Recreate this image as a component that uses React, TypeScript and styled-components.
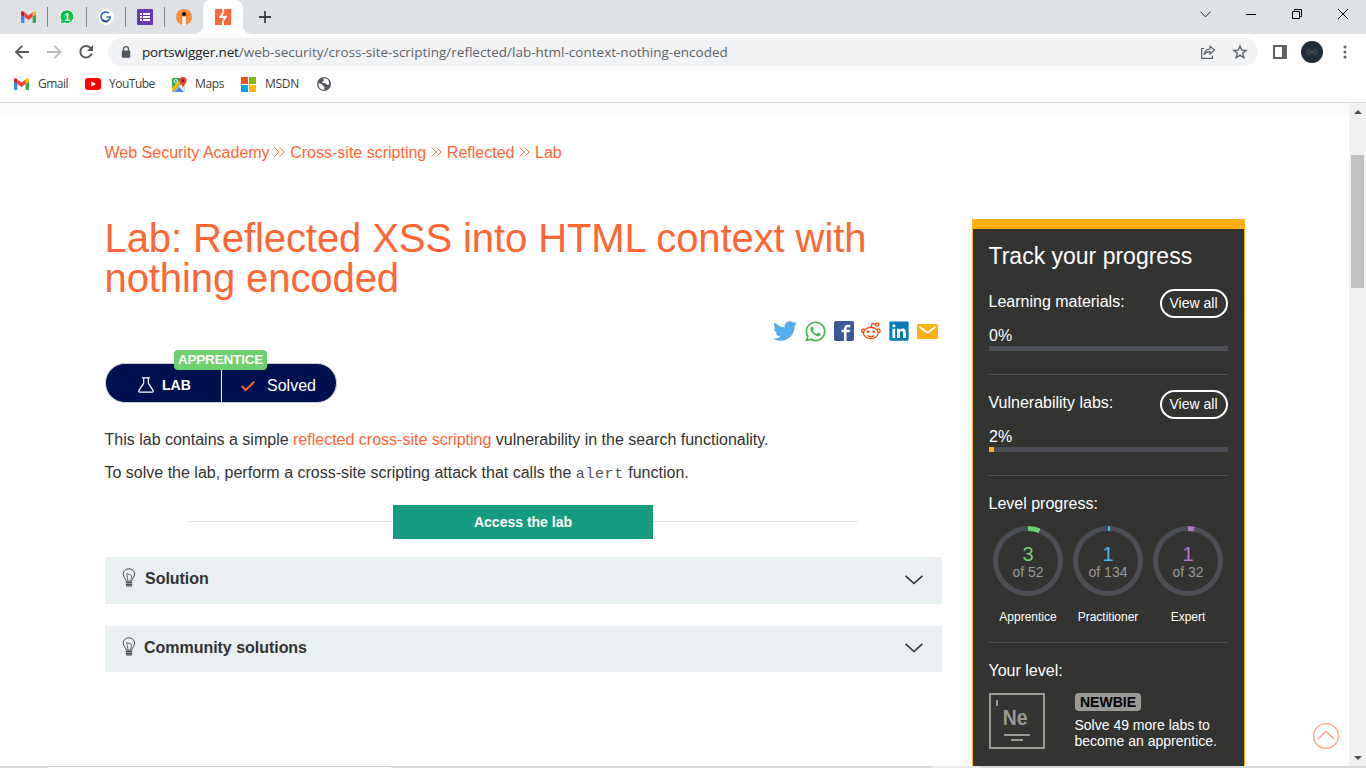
import React from 'react';
import styled, { createGlobalStyle } from 'styled-components';
import { FaTwitter, FaWhatsapp, FaLinkedin } from 'react-icons/fa';
import { ImFacebook2 } from 'react-icons/im';

const ORANGE = '#ff6633';
const AMBER = '#ffaf12';
const TRACK = '#4b4e54';

const GlobalStyle = createGlobalStyle`
  * { box-sizing: border-box; }
  body { margin: 0; background: #fff; overflow: hidden; }
  svg { display: block; flex: none; }
`;

const Browser = styled.div`
  width: 1366px;
  height: 768px;
  display: flex;
  flex-direction: column;
  overflow: hidden;
  font-family: 'Liberation Sans', Arial, sans-serif;
`;

/* ---------- tab strip ---------- */
const TabStrip = styled.div`
  height: 34px;
  flex: none;
  background: #dee1e6;
  display: flex;
  align-items: center;
  padding-left: 9px;
`;
const PinnedTab = styled.div<{ $divider?: boolean }>`
  width: 39px;
  height: 20px;
  display: flex;
  align-items: center;
  justify-content: center;
  border-right: 1px solid ${(p) => (p.$divider ? '#80848a' : 'transparent')};
`;
const ActiveTab = styled.div`
  width: 40px;
  height: 34px;
  margin-left: -1px;
  background: #fff;
  border-radius: 8px 8px 0 0;
  display: flex;
  align-items: center;
  justify-content: center;
  position: relative;
  &::before, &::after {
    content: '';
    position: absolute;
    bottom: 0;
    width: 8px;
    height: 8px;
  }
  &::before { left: -8px; background: radial-gradient(circle at 0 0, transparent 7.5px, #fff 8px); }
  &::after { right: -8px; background: radial-gradient(circle at 100% 0, transparent 7.5px, #fff 8px); }
`;
const NewTab = styled.div`
  width: 44px;
  display: flex;
  justify-content: center;
`;
const WindowControls = styled.div`
  margin-left: auto;
  display: flex;
  height: 28px;
  align-self: flex-start;
`;
const WindowButton = styled.div`
  width: 46px;
  display: flex;
  align-items: center;
  justify-content: center;
`;

/* ---------- toolbar ---------- */
const Toolbar = styled.div`
  height: 36px;
  flex: none;
  display: flex;
  align-items: center;
  padding: 0 12px 0 13px;
`;
const NavButton = styled.div`
  width: 32px;
  padding-left: 2px;
`;
const Omnibox = styled.div`
  width: 1150px;
  height: 28px;
  margin-left: -1px;
  border-radius: 14px;
  background: #f1f3f4;
  display: flex;
  align-items: center;
  padding: 0 10px 0 12px;
`;
const Url = styled.div`
  margin-left: 10px;
  flex: 1;
  font-family: 'Open Sans', 'Noto Sans', sans-serif;
  font-size: 13.5px;
  letter-spacing: 0;
  color: #5f6368;
  white-space: nowrap;
  b { font-weight: 400; color: #202124; letter-spacing: -0.15px; }
`;
const OmniboxActions = styled.div`
  display: flex;
  gap: 16px;
  align-items: center;
`;
const ToolbarActions = styled.div`
  display: flex;
  align-items: center;
  margin-left: 15px;
`;
const Avatar = styled.div`
  width: 22px;
  height: 22px;
  margin: 0 20px 0 14px;
  border-radius: 50%;
  background: #202c3a;
  display: flex;
  align-items: center;
  justify-content: center;
`;

/* ---------- bookmarks ---------- */
const Bookmarks = styled.div`
  height: 33px;
  flex: none;
  display: flex;
  align-items: flex-start;
  padding: 5px 0 0 14px;
  border-bottom: 1px solid #dadce0;
`;
const Bookmark = styled.div<{ $width: number; $gap: number; $track: number }>`
  width: ${(p) => p.$width}px;
  height: 18px;
  display: flex;
  align-items: center;
  gap: ${(p) => p.$gap}px;
  font: 12px 'Open Sans', 'Noto Sans', sans-serif;
  letter-spacing: ${(p) => p.$track}px;
  color: #3c4043;
  white-space: nowrap;
  span { margin-top: -1px; }
`;

/* ---------- page ---------- */
const Viewport = styled.div`
  height: 663px;
  flex: none;
  display: flex;
`;
const Page = styled.main`
  width: 1349px;
  height: 663px;
  overflow: hidden;
  position: relative;
`;
const HeaderEdge = styled.div`
  height: 14px;
  background: #fbfbfb;
`;
const Breadcrumbs = styled.nav`
  display: flex;
  align-items: center;
  gap: 5px;
  height: 20px;
  margin: 25px 0 0 104.5px;
  font-size: 16px;
  line-height: 20px;
  color: ${ORANGE};
  white-space: nowrap;
  span { padding-top: 2px; }
  svg { margin: 0 0 1px -0.4px; }
`;
const Columns = styled.div`
  display: flex;
  align-items: flex-start;
  gap: 30px;
  margin: 57px 0 0 105px;
`;
const Article = styled.article`
  width: 837px;
`;
const Title = styled.h1`
  margin: -1px 0 0 -0.5px;
  font-size: 40px;
  font-weight: 400;
  line-height: 40px;
  letter-spacing: -0.09px;
  color: ${ORANGE};
`;
const ShareRow = styled.div`
  display: flex;
  align-items: center;
  justify-content: flex-end;
  gap: 7px;
  height: 22px;
  margin-top: 22px;
  padding-right: 4px;
`;
const LabStatus = styled.div`
  position: relative;
  width: 232px;
  height: 40px;
  margin: 21px 0 0;
  border: 1px solid #c9cdd8;
  border-radius: 20px;
  background: #00104e;
  color: #fff;
  display: flex;
`;
const StatusPart = styled.div<{ $bold?: boolean }>`
  flex: ${(p) => (p.$bold ? '0 0 116px' : '1')};
  display: flex;
  align-items: center;
  padding: ${(p) => (p.$bold ? 4 : 5)}px 0 0 ${(p) => (p.$bold ? 32 : 19)}px;
  gap: ${(p) => (p.$bold ? 8 : 12)}px;
  font-size: ${(p) => (p.$bold ? 14 : 16)}px;
  font-weight: ${(p) => (p.$bold ? 700 : 400)};
  border-right: ${(p) => (p.$bold ? '1px solid #fff' : 'none')};
`;
const LevelLabel = styled.span`
  position: absolute;
  left: 68px;
  top: -14px;
  width: 93px;
  height: 20px;
  border-radius: 4px;
  background: #6fd06e;
  font-size: 13.5px;
  font-weight: 700;
  line-height: 20px;
  text-align: center;
  letter-spacing: -0.18px;
`;
const Paragraph = styled.p`
  margin: 0 0 9px -0.5px;
  font-size: 16px;
  line-height: 24px;
  color: #333332;
  white-space: nowrap;
  a { color: ${ORANGE}; }
  code { font-family: 'Liberation Mono', 'Courier New', monospace; font-size: 15px; letter-spacing: 0.6px; color: #555; }
`;
const Description = styled.div`
  margin-top: 25px;
`;
const AccessRow = styled.div`
  display: flex;
  align-items: center;
  width: 670px;
  margin: 18px 0 18px 83px;
`;
const Rule = styled.span`
  flex: 1;
  height: 1px;
  background: #e4e4e4;
  margin-bottom: 1px;
`;
const AccessButton = styled.button`
  width: 260px;
  height: 34px;
  padding: 0;
  border: 0;
  background: #159b80;
  color: #fff;
  font: 700 14px 'Liberation Sans', Arial, sans-serif;
`;
const Accordion = styled.div<{ $height: number }>`
  height: ${(p) => p.$height}px;
  margin-bottom: 22px;
  padding: 11px 19px 0 17px;
  background: #eaeff2;
  display: flex;
  align-items: flex-start;
  font-size: 16px;
  font-weight: 700;
  line-height: 21px;
  letter-spacing: -0.03px;
  color: #333332;
`;
const AccordionTitle = styled.span<{ $inset: number }>`
  flex: 1;
  margin-left: ${(p) => p.$inset}px;
`;
const AccordionArrow = styled.span<{ $drop: number }>`
  padding-top: ${(p) => p.$drop}px;
`;

/* ---------- progress panel ---------- */
const Panel = styled.aside`
  width: 273px;
  height: 560px;
  padding: 0 16px;
  border: 1px solid ${AMBER};
  border-top-width: 10px;
  background: #333332;
  color: #fff;
`;
const PanelTitle = styled.h2`
  margin: 14px 0 19px -0.5px;
  font-size: 23px;
  font-weight: 400;
  line-height: 27px;
  white-space: nowrap;
`;
const PanelSection = styled.section<{ $height: number; $pad?: number }>`
  height: ${(p) => p.$height}px;
  padding-top: ${(p) => p.$pad ?? 0}px;
  border-bottom: 1px solid #4e5056;
`;
const SectionHead = styled.div`
  display: flex;
  justify-content: space-between;
  height: 36px;
  margin-left: -0.5px;
  font-size: 16px;
  line-height: 26px;
`;
const ViewAll = styled.span`
  width: 68px;
  height: 29px;
  border: 2px solid #fff;
  border-radius: 15px;
  padding-right: 1px;
  font-size: 14px;
  line-height: 25px;
  text-align: center;
`;
const Percent = styled.div`
  font-size: 16px;
  line-height: 21px;
`;
const Bar = styled.div`
  height: 5px;
  background: ${TRACK};
`;
const BarFill = styled.div`
  height: 5px;
  background: ${AMBER};
`;
const PanelLabel = styled.div`
  margin-left: -0.5px;
  height: 24px;
  font-size: 16px;
  line-height: 26px;
`;
const Rings = styled.div`
  display: grid;
  grid-template-columns: repeat(3, 80px);
  margin: 11px 0 0 -1px;
`;
const RingItem = styled.div`
  display: flex;
  flex-direction: column;
  align-items: center;
  font-size: 12px;
  line-height: 16px;
`;
const Ring = styled.div<{ $color: string; $deg: number }>`
  width: 70px;
  height: 70px;
  margin-bottom: 13px;
  padding: 5px;
  border-radius: 50%;
  background: conic-gradient(${(p) => p.$color} ${(p) => p.$deg}deg, ${TRACK} ${(p) => p.$deg}deg);
`;
const RingCore = styled.div<{ $color: string }>`
  height: 60px;
  border-radius: 50%;
  background: #333332;
  color: #999;
  text-align: center;
  padding-top: 13px;
  font-size: 14px;
  line-height: 17px;
  b { display: block; font-weight: 400; font-size: 20px; line-height: 20px; color: ${(p) => p.$color}; }
`;
const LevelRow = styled.div`
  display: flex;
  gap: 30px;
  margin-top: 11px;
`;
const ElementTile = styled.div`
  width: 56px;
  height: 56px;
  border: 2px solid #999996;
  display: flex;
  flex-direction: column;
  align-items: center;
  color: #999996;
  font-weight: 700;
  font-size: 22px;
  line-height: 22px;
  padding: 12px 4px 0 0;
  position: relative;
  span { transform: scaleX(0.88); }
`;
const TileMark = styled.i<{ $x: number; $y: number; $w: number; $h: number }>`
  position: absolute;
  left: ${(p) => p.$x}px;
  top: ${(p) => p.$y}px;
  width: ${(p) => p.$w}px;
  height: ${(p) => p.$h}px;
  background: #999996;
`;
const LevelText = styled.div`
  margin-left: -0.5px;
  font-size: 14px;
  line-height: 16px;
  white-space: nowrap;
`;
const Newbie = styled.div`
  width: 66px;
  height: 18px;
  margin: 0 0 6px 0.5px;
  border-radius: 4px;
  background: #999996;
  color: #000;
  font-weight: 700;
  line-height: 18px;
  text-align: center;
`;
const BackToTop = styled.div`
  position: absolute;
  left: 1312px;
  top: 619px;
`;

/* ---------- scrollbar and lower edge ---------- */
const Scrollbar = styled.div`
  width: 17px;
  background: #f1f1f1;
  display: flex;
  flex-direction: column;
  align-items: center;
  padding: 7px 0 6px;
`;
const Thumb = styled.div`
  width: 13px;
  height: 133px;
  margin: 41px 0 auto;
  background: #c1c1c1;
`;
const WindowEdge = styled.div`
  display: flex;
  height: 2px;
  flex: none;
`;
const EdgePiece = styled.div<{ $width?: number; $color: string; $open?: boolean }>`
  ${(p) => (p.$width ? `width: ${p.$width}px;` : 'flex: 1;')}
  background: ${(p) => p.$color};
  border-top: ${(p) => (p.$open ? '1px solid #c8c8c8' : 'none')};
`;

const GmailIcon = ({ w = 15 }: { w?: number }) => (
  <svg width={w} height={w * 0.8} viewBox="0 0 15 12">
    <path d="M0 2v9q0 1 1 1h2.4V5z" fill="#4285f4" />
    <path d="M11.6 5v7H14q1 0 1-1V2z" fill="#34a853" />
    <path d="M11.6 1.4V6L15 3.4V2c0-1.7-1.8-2.5-3.4-.6z" fill="#fbbc04" />
    <path d="M0 2v1.4L3.4 6V1.4C1.8-.5 0 .3 0 2z" fill="#c5221f" />
    <path d="M3.4 6V1.4l4.1 3.1 4.1-3.1V6L7.5 9.1z" fill="#ea4335" />
  </svg>
);
const WhatsAppTabIcon = () => (
  <svg width="16" height="16" viewBox="0 0 16 16">
    <path d="M8 .7A7 7 0 1 1 4.8 14L1 15l1-3.6A7 7 0 0 1 8 .7z" fill="#0ac244" stroke="#fff" />
    <text x="8.2" y="11.6" fontSize="10.5" fontWeight="700" textAnchor="middle" fill="#fff">1</text>
  </svg>
);
const GTabIcon = () => (
  <svg width="16" height="16" viewBox="0 0 16 16">
    <circle cx="8" cy="8" r="8" fill="#fff" />
    <path d="M10.7 4.2A4.6 4.6 0 1 0 12.2 8H8.5" fill="none" stroke="#2766cc" strokeWidth="1.7" />
    <path d="M4.2 10.3a4.6 4.6 0 0 0 5.6 2" fill="none" stroke="#173c78" strokeWidth="1.6" />
  </svg>
);
const FormsIcon = () => (
  <svg width="16" height="16" viewBox="0 0 16 16">
    <rect width="16" height="16" rx="1" fill="#673ab7" />
    <path d="M3 4h2v2H3zM6 4h7v2H6zM3 7h2v2H3zM6 7h7v2H6zM3 10h2v2H3zM6 10h7v2H6z" fill="#fff" />
  </svg>
);
const InfoTabIcon = () => (
  <svg width="16" height="16" viewBox="0 0 16 16">
    <circle cx="8" cy="8" r="8" fill="#f68c3c" />
    <path d="M6.3 7.5h3.4V16H6.3z" fill="#fff" />
    <circle cx="8" cy="5" r="2" fill="#111" />
  </svg>
);
const BoltIcon = () => (
  <svg width="16" height="16" viewBox="0 0 16 16">
    <path d="M0 0h16v16H0z" fill={ORANGE} />
    <path d="M7.2 0h2v3.2L7.4 6.8h5L9 12.3V16H7v-3.4l1.7-3.5H3.6L7.2 3.6z" fill="#fff" />
  </svg>
);
const ShareIcon = () => (
  <svg width="16" height="16" viewBox="0 0 16 16" fill="none" stroke="#5f6368" strokeWidth="1.2">
    <path d="M4.2 4.5H1.6v9.9h10.8v-2.6" />
    <path d="M4 10.8c.4-3.8 2.4-5.6 6-5.8V2.2L14.6 6 10 10V7.6c-2.7-.1-4.5.8-6 3.2z" />
  </svg>
);
const Bulb = () => (
  <svg width="14" height="19" viewBox="0 0 14 19" fill="none" stroke="#4c4e4f" strokeWidth="1">
    <path d="M4.2 13.2C4 10.5 1.2 9.3 1.2 6.1a5.7 5.3 0 0 1 11.4 0c0 3.2-2.7 4.4-2.9 7.1z" />
    <path d="M6 13 4.8 5.5l3.2 1.3 1.6.7L8.6 13" strokeWidth=".8" />
    <path d="M3.8 14.7h6.4M3.8 16.3h6.4M4 17.9h6" strokeWidth="1.2" />
  </svg>
);
const Chevron = () => (
  <svg width="18" height="10" viewBox="0 0 18 10" fill="none" stroke="#333332" strokeWidth="1.6">
    <path d="M.6.8 9 8.5 17.4.8" />
  </svg>
);
const DoubleChevron = () => (
  <svg width="11" height="10" viewBox="0 0 11 10" fill="none" stroke={ORANGE} strokeWidth="1">
    <path d="M.6.5 5 5 .6 9.5M5.8.5 10.2 5 5.8 9.5" />
  </svg>
);
const Reddit = () => (
  <svg width="20" height="18" viewBox="0 0 20 18" fill="none" stroke="#ff4500" strokeWidth="1.2">
    <ellipse cx="9.8" cy="11" rx="7.3" ry="5.7" />
    <path d="M3.5 7.5C2 6.3.6 7.4.6 8.9c0 1 .8 1.7 1.9 2M16.2 7.5c1.5-1.2 2.9-.1 2.9 1.4 0 1-.8 1.7-1.9 2" />
    <path d="M9.9 5.3 11.2 1.5l3.5.9" />
    <circle cx="16.2" cy="2.5" r="1.7" />
    <path d="M6.4 13.5c2 1.5 4.9 1.5 6.9 0" />
    <circle cx="7" cy="9.8" r="1.3" fill="#ff4500" stroke="none" />
    <circle cx="12.7" cy="9.8" r="1.3" fill="#ff4500" stroke="none" />
  </svg>
);

const crumbs = ['Web Security Academy', 'Cross-site scripting', 'Reflected', 'Lab'];
const rings = [
  { name: 'Apprentice', done: 3, total: 52, color: '#6fd06e', deg: 20.8 },
  { name: 'Practitioner', done: 1, total: 134, color: '#44b8f3', deg: 3 },
  { name: 'Expert', done: 1, total: 32, color: '#b077c9', deg: 11.3 },
];
const materials = [
  { name: 'Learning materials:', percent: 0, height: 86, pad: 0 },
  { name: 'Vulnerability labs:', percent: 2, height: 101, pad: 15 },
];

export default function App() {
  return (
    <Browser>
      <GlobalStyle />
      <TabStrip>
        <PinnedTab $divider><GmailIcon /></PinnedTab>
        <PinnedTab $divider><WhatsAppTabIcon /></PinnedTab>
        <PinnedTab $divider><GTabIcon /></PinnedTab>
        <PinnedTab $divider><FormsIcon /></PinnedTab>
        <PinnedTab><InfoTabIcon /></PinnedTab>
        <ActiveTab><BoltIcon /></ActiveTab>
        <NewTab>
          <svg width="12" height="12" viewBox="0 0 12 12"><path d="M6 0v12M0 6h12" stroke="#3c4043" strokeWidth="1.8" /></svg>
        </NewTab>
        <WindowControls>
          <WindowButton>
            <svg width="11" height="7" viewBox="0 0 11 7"><path d="M.5.7 5.5 5.9 10.5.7" fill="none" stroke="#222" /></svg>
          </WindowButton>
          <WindowButton>
            <svg width="10" height="2"><path d="M0 1.5h10" stroke="#000" /></svg>
          </WindowButton>
          <WindowButton>
            <svg width="10" height="10" fill="none" stroke="#000"><path d="M.5 2.5h7v7h-7zM2.5 2.5v-2h7v7h-2" /></svg>
          </WindowButton>
          <WindowButton>
            <svg width="10" height="10" stroke="#000"><path d="M0 0l10 10M10 0 0 10" /></svg>
          </WindowButton>
        </WindowControls>
      </TabStrip>

      <Toolbar>
        <NavButton>
          <svg width="15" height="14" viewBox="0 0 15 14" fill="none" stroke="#55585d" strokeWidth="1.9"><path d="M14 7H1.5M7.2.8 1 7l6.2 6.2" /></svg>
        </NavButton>
        <NavButton>
          <svg width="15" height="14" viewBox="0 0 15 14" fill="none" stroke="#b9bbbe" strokeWidth="1.9"><path d="M0 7h13M7.3.8 13.5 7l-6.2 6.2" /></svg>
        </NavButton>
        <NavButton>
          <svg width="15" height="14" viewBox="0 0 15 14"><path d="M12 3.5A5.8 5.8 0 1 0 12.7 8.5" fill="none" stroke="#55585d" strokeWidth="1.9" /><path d="M14 0v6H8z" fill="#55585d" /></svg>
        </NavButton>
        <Omnibox>
          <svg width="12" height="12" viewBox="0 0 12 12"><path d="M3.5 5V3.2a2.5 2.5 0 0 1 5 0V5" fill="none" stroke="#55585d" strokeWidth="1.3" /><rect x="1.8" y="4.4" width="8.4" height="7.3" rx="1" fill="#55585d" /></svg>
          <Url><b>portswigger.net</b>/web-security/cross-site-scripting/reflected/lab-html-context-nothing-encoded</Url>
          <OmniboxActions>
            <ShareIcon />
            <svg width="16" height="16" viewBox="0 0 16 16"><path d="m8 2 1.7 4.1 4.4.3-3.4 2.9 1.1 4.3L8 11.3l-3.8 2.3 1.1-4.3L1.9 6.4l4.4-.3z" fill="none" stroke="#5f6368" strokeWidth="1.4" /></svg>
          </OmniboxActions>
        </Omnibox>
        <ToolbarActions>
          <svg width="14" height="14"><path d="M0 0h14v14H0z" fill="#5f6368" /><path d="M2 2h7v10H2z" fill="#fff" /></svg>
          <Avatar>
            <svg width="12" height="6" viewBox="0 0 12 6" fill="none" stroke="#4c545d"><circle cx="3" cy="3" r="2.2" /><circle cx="9" cy="3" r="2.2" /><path d="M3 3h6" /></svg>
          </Avatar>
          <svg width="4" height="14" fill="#5f6368"><circle cx="2" cy="2" r="1.5" /><circle cx="2" cy="7" r="1.5" /><circle cx="2" cy="12" r="1.5" /></svg>
        </ToolbarActions>
      </Toolbar>

      <Bookmarks>
        <Bookmark $width={71} $gap={9} $track={-0.5}><GmailIcon /><span>Gmail</span></Bookmark>
        <Bookmark $width={87} $gap={8} $track={-0.5}>
          <svg width="16" height="12" viewBox="0 0 16 12"><rect width="16" height="12" rx="3" fill="#f00" /><path d="M6.3 3.2v5.6l4.7-2.8z" fill="#fff" /></svg>
          <span>YouTube</span>
        </Bookmark>
        <Bookmark $width={69} $gap={8} $track={-0.35}>
          <svg width="15" height="15" viewBox="0 0 15 15">
            <rect y="1" width="13" height="14" rx="1.5" fill="#34a853" />
            <path d="M1 15 12.5 3.5l.5 10.5q0 1-1 1z" fill="#e8eaed" />
            <path d="M2 15 7 10l5 5z" fill="#4285f4" />
            <path d="M0 11 9 2l2 2L1 14q-1 0-1-1z" fill="#fbbc04" />
            <path d="M0 9V2.5Q0 1 1.5 1H9z" fill="#34a853" />
            <circle cx="3.8" cy="4.3" r="1.7" fill="none" stroke="#fff" />
            <path d="M11 0a3.7 3.7 0 0 1 3.7 3.7C14.7 6 11.7 7.5 11 11c-.7-3.5-3.7-5-3.7-7.3A3.7 3.7 0 0 1 11 0z" fill="#ea4335" />
            <circle cx="11" cy="3.7" r="1.3" fill="#811411" />
          </svg>
          <span>Maps</span>
        </Bookmark>
        <Bookmark $width={75} $gap={9} $track={-0.25}>
          <svg width="15" height="15"><path d="M0 0h7v7H0z" fill="#f25022" /><path d="M8 0h7v7H8z" fill="#7fba00" /><path d="M0 8h7v7H0z" fill="#00a4ef" /><path d="M8 8h7v7H8z" fill="#ffb900" /></svg>
          <span>MSDN</span>
        </Bookmark>
        <Bookmark $width={16} $gap={0} $track={0}>
          <svg width="16" height="16" viewBox="0 0 16 16"><circle cx="8" cy="8" r="7" fill="#55585d" /><path d="M2.4 7.5c2.2 0 3.8.4 4.3 2 .3 1 1.8.7 1.8 2l-.4 2.3C4.6 14 2.2 11 2.4 7.5zM7.5 2.3c-.3 1.7.8 1.9 0 2.9-.5.6-1.7.5-1.5 1.4.4 1.2 3 .2 4 1.1.8.7 1.2 1.4 2.6 1.2C14.5 5 11 1.6 7.5 2.3z" fill="#fff" /></svg>
        </Bookmark>
      </Bookmarks>

      <Viewport>
        <Page>
          <HeaderEdge />
          <Breadcrumbs>
            {crumbs.map((c, i) => (
              <React.Fragment key={c}>
                {i > 0 && <DoubleChevron />}
                <span>{c}</span>
              </React.Fragment>
            ))}
          </Breadcrumbs>
          <Columns>
            <Article>
              <Title>Lab: Reflected XSS into HTML context with<br />nothing encoded</Title>
              <ShareRow>
                <FaTwitter size={24} color="#55acee" />
                <FaWhatsapp size={23} color="#43b649" />
                <ImFacebook2 size={20} color="#3b5998" />
                <Reddit />
                <FaLinkedin size={22} color="#007bb6" />
                <svg width="21" height="15" viewBox="0 0 21 15"><rect width="21" height="15" rx="1.5" fill={AMBER} /><path d="m2.5 2.8 8 6 8-6" fill="none" stroke="#fff" strokeWidth="1.8" /></svg>
              </ShareRow>
              <LabStatus>
                <StatusPart $bold>
                  <svg width="16" height="16" viewBox="0 0 16 16" fill="none" stroke="#fff" strokeWidth="1.2"><path d="M4 .8h8M5.7.8v5.4L1 13.3q-.8 1.7 1 1.9h12q1.8-.2 1-1.9L10.3 6.2V.8" /></svg>
                  LAB
                </StatusPart>
                <StatusPart>
                  <svg width="14" height="10" viewBox="0 0 14 10"><path d="m.8 5 4 4L13.2.8" fill="none" stroke={ORANGE} strokeWidth="1.9" /></svg>
                  Solved
                </StatusPart>
                <LevelLabel>APPRENTICE</LevelLabel>
              </LabStatus>
              <Description>
                <Paragraph>This lab contains a simple <a>reflected cross-site scripting</a> vulnerability in the search functionality.</Paragraph>
                <Paragraph>To solve the lab, perform a cross-site scripting attack that calls the <code>alert</code> function.</Paragraph>
              </Description>
              <AccessRow>
                <Rule />
                <AccessButton>Access the lab</AccessButton>
                <Rule />
              </AccessRow>
              <Accordion $height={47}>
                <Bulb />
                <AccordionTitle $inset={9}>Solution</AccordionTitle>
                <AccordionArrow $drop={7}><Chevron /></AccordionArrow>
              </Accordion>
              <Accordion $height={46}>
                <Bulb />
                <AccordionTitle $inset={8}>Community solutions</AccordionTitle>
                <AccordionArrow $drop={6}><Chevron /></AccordionArrow>
              </Accordion>
            </Article>

            <Panel>
              <PanelTitle>Track your progress</PanelTitle>
              {materials.map((m) => (
                <PanelSection key={m.name} $height={m.height} $pad={m.pad}>
                  <SectionHead>{m.name}<ViewAll>View all</ViewAll></SectionHead>
                  <Percent>{m.percent}%</Percent>
                  <Bar><BarFill style={{ width: `${m.percent}%` }} /></Bar>
                </PanelSection>
              ))}
              <PanelSection $height={167} $pad={15}>
                <PanelLabel>Level progress:</PanelLabel>
                <Rings>
                  {rings.map((r) => (
                    <RingItem key={r.name}>
                      <Ring $color={r.color} $deg={r.deg}>
                        <RingCore $color={r.color}><b>{r.done}</b>of {r.total}</RingCore>
                      </Ring>
                      {r.name}
                    </RingItem>
                  ))}
                </Rings>
              </PanelSection>
              <PanelSection $height={140} $pad={15}>
                <PanelLabel>Your level:</PanelLabel>
                <LevelRow>
                  <ElementTile>
                    <TileMark $x={5} $y={5} $w={2} $h={6} />
                    <span>Ne</span>
                    <TileMark $x={13} $y={39} $w={26} $h={2} />
                    <TileMark $x={20} $y={44} $w={12} $h={2} />
                  </ElementTile>
                  <LevelText>
                    <Newbie>NEWBIE</Newbie>
                    Solve 49 more labs to<br />become an apprentice.
                  </LevelText>
                </LevelRow>
              </PanelSection>
            </Panel>
          </Columns>
          <BackToTop>
            <svg width="28" height="28" viewBox="0 0 28 28" fill="none" stroke="#ffa385" strokeWidth="1.3"><circle cx="14" cy="14" r="12.4" /><path d="M6 17l8-7.5 8 7.5" /></svg>
          </BackToTop>
        </Page>
        <Scrollbar>
          <svg width="8" height="4"><path d="M0 4 4 0l4 4z" fill="#505050" /></svg>
          <Thumb />
          <svg width="8" height="4"><path d="M0 0h8L4 4z" fill="#505050" /></svg>
        </Scrollbar>
      </Viewport>
      <WindowEdge>
        <EdgePiece $width={48} $color="#d9d9d9" />
        <EdgePiece $width={343} $color="#fff" $open />
        <EdgePiece $width={541} $color="#d9d9d9" />
        <EdgePiece $width={48} $color="#ebebeb" />
        <EdgePiece $color="#d9d9d9" />
      </WindowEdge>
    </Browser>
  );
}
